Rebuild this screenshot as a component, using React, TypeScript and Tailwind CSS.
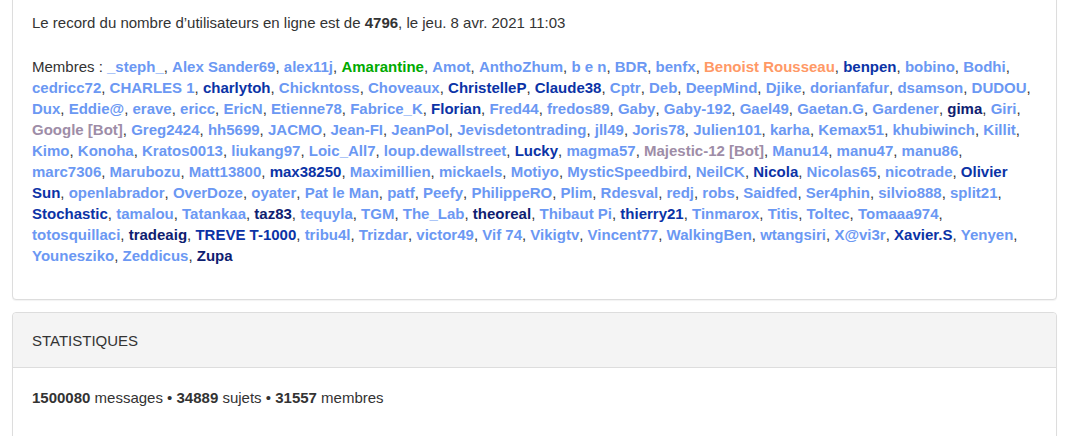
import React from "react";

type Kind = "light" | "royal" | "dark" | "green" | "orange" | "bot";

const colors: Record<Kind, string> = {
  light: "text-[#6b98f3]",
  royal: "text-[#0b33a6]",
  dark: "text-[#0e2070]",
  green: "text-[#00aa00]",
  orange: "text-[#ff9966]",
  bot: "text-[#9e8da7]",
};

const members: [string, Kind][] = [
  ["_steph_", "light"],
  ["Alex Sander69", "light"],
  ["alex11j", "light"],
  ["Amarantine", "green"],
  ["Amot", "light"],
  ["AnthoZhum", "light"],
  ["b e n", "light"],
  ["BDR", "light"],
  ["benfx", "light"],
  ["Benoist Rousseau", "orange"],
  ["benpen", "royal"],
  ["bobino", "light"],
  ["Bodhi", "light"],
  ["cedricc72", "light"],
  ["CHARLES 1", "light"],
  ["charlytoh", "royal"],
  ["Chickntoss", "light"],
  ["Choveaux", "light"],
  ["ChristelleP", "royal"],
  ["Claude38", "royal"],
  ["Cptr", "light"],
  ["Deb", "light"],
  ["DeepMind", "light"],
  ["Djike", "light"],
  ["dorianfafur", "light"],
  ["dsamson", "light"],
  ["DUDOU", "light"],
  ["Dux", "light"],
  ["Eddie@", "light"],
  ["erave", "light"],
  ["ericc", "light"],
  ["EricN", "light"],
  ["Etienne78", "light"],
  ["Fabrice_K", "light"],
  ["Florian", "royal"],
  ["Fred44", "light"],
  ["fredos89", "light"],
  ["Gaby", "light"],
  ["Gaby-192", "light"],
  ["Gael49", "light"],
  ["Gaetan.G", "light"],
  ["Gardener", "light"],
  ["gima", "dark"],
  ["Giri", "light"],
  ["Google [Bot]", "bot"],
  ["Greg2424", "light"],
  ["hh5699", "light"],
  ["JACMO", "light"],
  ["Jean-FI", "light"],
  ["JeanPol", "light"],
  ["Jevisdetontrading", "light"],
  ["jll49", "light"],
  ["Joris78", "light"],
  ["Julien101", "light"],
  ["karha", "light"],
  ["Kemax51", "light"],
  ["khubiwinch", "light"],
  ["Killit", "light"],
  ["Kimo", "light"],
  ["Konoha", "light"],
  ["Kratos0013", "light"],
  ["liukang97", "light"],
  ["Loic_All7", "light"],
  ["loup.dewallstreet", "light"],
  ["Lucky", "royal"],
  ["magma57", "light"],
  ["Majestic-12 [Bot]", "bot"],
  ["Manu14", "light"],
  ["manu47", "light"],
  ["manu86", "light"],
  ["marc7306", "light"],
  ["Marubozu", "light"],
  ["Matt13800", "light"],
  ["max38250", "royal"],
  ["Maximillien", "light"],
  ["mickaels", "light"],
  ["Motiyo", "light"],
  ["MysticSpeedbird", "light"],
  ["NeilCK", "light"],
  ["Nicola", "royal"],
  ["Nicolas65", "light"],
  ["nicotrade", "light"],
  ["Olivier Sun", "royal"],
  ["openlabrador", "light"],
  ["OverDoze", "light"],
  ["oyater", "light"],
  ["Pat le Man", "light"],
  ["patf", "light"],
  ["Peefy", "light"],
  ["PhilippeRO", "light"],
  ["Plim", "light"],
  ["Rdesval", "light"],
  ["redj", "light"],
  ["robs", "light"],
  ["Saidfed", "light"],
  ["Ser4phin", "light"],
  ["silvio888", "light"],
  ["split21", "light"],
  ["Stochastic", "royal"],
  ["tamalou", "light"],
  ["Tatankaa", "light"],
  ["taz83", "dark"],
  ["tequyla", "light"],
  ["TGM", "light"],
  ["The_Lab", "light"],
  ["theoreal", "dark"],
  ["Thibaut Pi", "light"],
  ["thierry21", "royal"],
  ["Tinmarox", "light"],
  ["Titis", "light"],
  ["Toltec", "light"],
  ["Tomaaa974", "light"],
  ["totosquillaci", "light"],
  ["tradeaig", "dark"],
  ["TREVE T-1000", "royal"],
  ["tribu4l", "light"],
  ["Trizdar", "light"],
  ["victor49", "light"],
  ["Vif 74", "light"],
  ["Vikigtv", "light"],
  ["Vincent77", "light"],
  ["WalkingBen", "light"],
  ["wtangsiri", "light"],
  ["X@vi3r", "light"],
  ["Xavier.S", "royal"],
  ["Yenyen", "light"],
  ["Younesziko", "light"],
  ["Zeddicus", "light"],
  ["Zupa", "dark"],
];

export default function App() {
  return (
    <div
      className="min-h-screen bg-white pl-[12px] pr-[24px] text-[15px] leading-[21px] text-[#333333]"
      style={{ fontFamily: '"Liberation Sans", Arial, sans-serif' }}
    >
      {/* Who is online */}
      <div className="-mt-[9px] rounded-[4px] border border-[#dddddd] bg-white px-[19px] pt-[20px] pb-[33px] shadow-[0_1px_1px_rgba(0,0,0,0.05)]">
        <p className="mb-[23px]">
          Le record du nombre d’utilisateurs en ligne est de <strong>4796</strong>, le jeu. 8 avr. 2021 11:03
        </p>
        <p>
          Membres :{" "}
          {members.map(([name, kind], i) => (
            <React.Fragment key={name}>
              <a href="#" className={`font-bold ${colors[kind]}`}>
                {name}
              </a>
              {i < members.length - 1 ? ", " : ""}
            </React.Fragment>
          ))}
        </p>
      </div>

      {/* Statistiques */}
      <div className="mt-[12px] rounded-[4px] border border-[#dddddd] bg-white shadow-[0_1px_1px_rgba(0,0,0,0.05)]">
        <div className="rounded-t-[4px] border-b border-[#dddddd] bg-[#f4f4f4] px-[19px] pt-[17px] pb-[16px] uppercase">
          Statistiques
        </div>
        <div className="px-[19px] pt-[19px] pb-[40px]">
          <strong>1500080</strong> messages • <strong>34889</strong> sujets • <strong>31557</strong> membres
        </div>
      </div>
    </div>
  );
}
